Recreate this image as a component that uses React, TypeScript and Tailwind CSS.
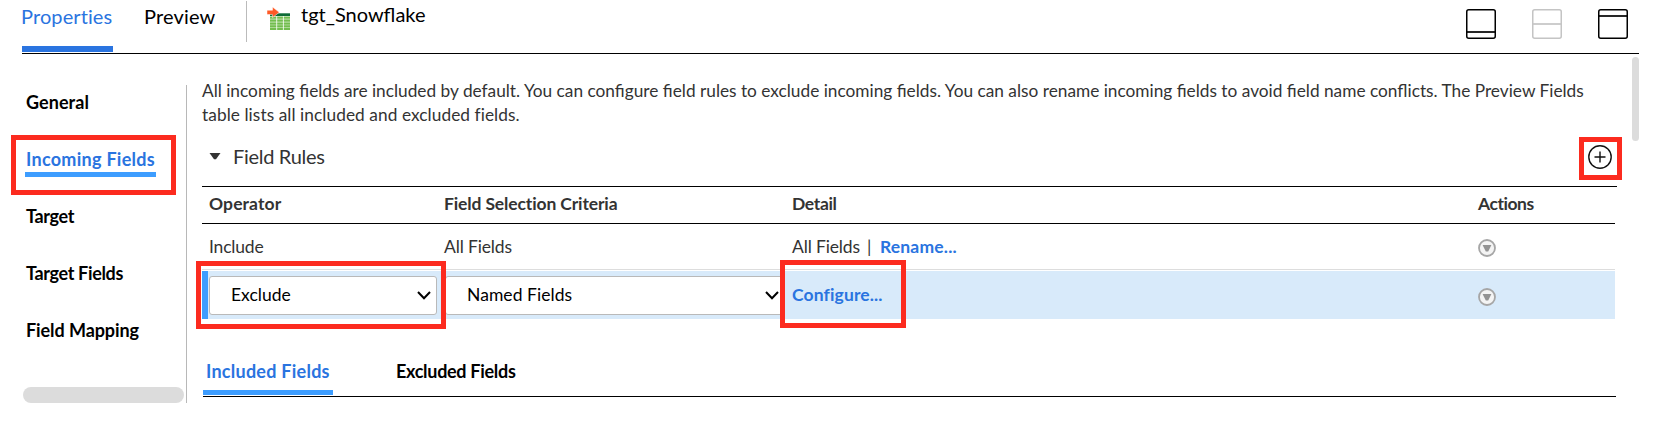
import type { ReactNode } from 'react';

const sideItems = [
  { label: 'General', cls: 'tracking-[0.07px]' },
  { label: 'Incoming Fields', cls: 'tracking-[0.28px]', active: true },
  { label: 'Target', cls: 'tracking-[-0.35px]' },
  { label: 'Target Fields', cls: 'tracking-[-0.34px]' },
  { label: 'Field Mapping', cls: 'tracking-[-0.08px]' },
];

function PaneIcon({ y, color }: { y: number; color: string }) {
  return (
    <svg width="30" height="30" viewBox="0 0 30 30" fill="none" stroke={color}>
      <rect x="0.75" y="0.75" width="28.5" height="28.5" rx="2" strokeWidth="1.5" />
      <path d={`M1 ${y}H29`} strokeWidth="1.7" />
    </svg>
  );
}

function TableIcon() {
  const rows = [9.6, 12.6, 15.6, 18.3, 21];
  return (
    <svg width="23" height="23" viewBox="0 0 23 23">
      <rect x="3" y="6.3" width="20" height="2.7" fill="#0d6b37" />
      <rect x="3" y="9.6" width="20" height="13.4" fill="#c4e4b4" />
      {rows.map((y) => (
        <rect key={y} x="3" y={y} width="20" height="2" fill="#72bd4e" />
      ))}
      <path d="M9.7 9V23M16.4 9V23" stroke="#fff" strokeWidth="0.8" />
      <path d="M0 3.2H5.5V0L12.3 5.3L5.5 10.6V7.6H0Z" fill="#ff5a26" stroke="#fff" strokeWidth="0.5" />
    </svg>
  );
}

function ActionIcon() {
  return (
    <svg className="mt-[3px]" width="18" height="18" viewBox="0 0 18 18">
      <circle cx="9" cy="9" r="8" fill="#f4f4f4" stroke="#a6a6a6" strokeWidth="1.8" />
      <path d="M4.6 6H13.4L10.2 12.6H7.8Z" fill="#939393" />
    </svg>
  );
}

function Select({ children, cls }: { children: ReactNode; cls: string }) {
  return (
    <div className={`flex h-[39px] items-center justify-between rounded-[3px] border border-[#b9b9b9] bg-white text-black ${cls}`}>
      <span className="pt-px">{children}</span>
      <svg width="14" height="9" viewBox="0 0 14 9" fill="none" stroke="#000" strokeWidth="2">
        <path d="M1 1L7 7.3L13 1" />
      </svg>
    </div>
  );
}

export default function App() {
  return (
    <div className="relative h-[421px] w-[1658px] overflow-hidden whitespace-nowrap bg-white font-['Lato',sans-serif] text-[17.5px] text-[#333]">
      <header className="ml-[22px] flex h-[54px] w-[1617px] items-start border-b border-black text-[20px] leading-8 text-black">
        <div className="h-[52px] w-[91px] border-b-[6px] border-[#2a74e0] tracking-[0.1px] text-[#2a74e0]"><span className="-ml-px">Properties</span></div>
        <div className="ml-[31px] w-[102px] tracking-[0.15px]">Preview</div>
        <div className="mt-px h-[41px] w-px bg-[#bbb]" />
        <div className="ml-5 mt-[7px]"><TableIcon /></div>
        <div className="ml-[11px] leading-[29px]">tgt_Snowflake</div>
        <div className="ml-auto mr-[11px] mt-[9px] flex gap-9">
          <PaneIcon y={23} color="#000" />
          <PaneIcon y={15} color="#c4c4c4" />
          <PaneIcon y={7} color="#000" />
        </div>
      </header>

      <div className="flex items-start">
        <nav className="mt-[31px] flex h-[318px] w-[187px] flex-col items-start border-r border-[#b8b8b8] pl-[23px] text-[18px] font-bold leading-[34px] text-black">
          {sideItems.map((it) =>
            it.active ? (
              <a key={it.label} className={`mb-[22px] ml-[2px] h-[35px] w-[131px] border-b-[5px] border-[#3d9dff] pl-px text-[#2a74e0] ${it.cls}`}>{it.label}</a>
            ) : (
              <a key={it.label} className={`mb-[23px] ml-[3px] h-[34px] ${it.cls}`}>{it.label}</a>
            ),
          )}
          <div className="mt-[17px] h-4 w-[161px] rounded-full bg-[#dcdcdc]" />
        </nav>

        <main className="ml-[15px] w-[1415px] pt-[25px]">
          <p className="text-[17.28px] leading-6">
            All incoming fields are included by default. You can configure field rules to exclude incoming fields. You can also rename incoming fields to avoid field name conflicts. The Preview Fields
            <br />
            <span className="tracking-[0.07px]">table lists all included and excluded fields.</span>
          </p>

          <div className="flex h-[59px] items-center pl-[7px] pr-[5px]">
            <svg width="12" height="7" viewBox="0 0 12 7"><path d="M0.5 0H11.5L7 6.3H5Z" fill="#333" /></svg>
            <h2 className="-mt-[2px] ml-[12px] text-[20px] tracking-[-0.3px]">Field Rules</h2>
            <svg className="ml-auto" width="24" height="24" viewBox="0 0 24 24" fill="none" stroke="#111" strokeWidth="1.4">
              <circle cx="12" cy="12" r="11.2" />
              <path d="M6.5 12H17.5M12 6.5V17.5" />
            </svg>
          </div>

          <div className="border-t border-black">
            <div className="flex h-[37px] w-[1413px] border-b border-black pl-[7px] font-bold leading-[33px]">
              <div className="w-[235px] tracking-[0.1px]">Operator</div>
              <div className="w-[348px] tracking-[-0.13px]">Field Selection Criteria</div>
              <div className="w-[686px] tracking-[-0.35px]">Detail</div>
              <div className="tracking-[-0.45px]">Actions</div>
            </div>
            <div className="flex h-[46px] w-[1413px] items-center border-b border-[#ddd] pl-[7px]">
              <div className="w-[235px] pt-[2px] tracking-[-0.2px]">Include</div>
              <div className="w-[348px] pt-[2px] tracking-[-0.15px]">All Fields</div>
              <div className="flex w-[686px] pt-[2px]">
                <span className="tracking-[-0.15px]">All Fields</span>
                <span className="ml-[7px] w-[13px]">|</span>
                <a className="font-bold tracking-[0.2px] text-[#2a74e0]">Rename...</a>
              </div>
              <ActionIcon />
            </div>
            <div className="mt-px flex h-12 w-[1413px] items-center border-l-[6px] border-[#3d9dff] bg-[#d8eafa]">
              <Select cls="ml-px w-[228px] pl-[21px] pr-[5px]">Exclude</Select>
              <Select cls="ml-2 w-[338px] pl-[21px] pr-[3px] tracking-[0.05px]">Named Fields</Select>
              <a className="ml-[9px] w-[686px] font-bold tracking-[0.13px] text-[#2a74e0]">Configure...</a>
              <ActionIcon />
            </div>
          </div>

          <div className="ml-px flex h-[78px] w-[1413px] items-start border-b border-black text-[18px] font-bold leading-8 text-black">
            <div className="h-[76px] w-[130px] border-b-[5px] border-[#3d9dff] pl-[3px] pt-[36px] tracking-[0.25px] text-[#2a74e0]">Included Fields</div>
            <div className="ml-[63px] pt-[36px] tracking-[-0.3px]">Excluded Fields</div>
          </div>
        </main>

        <div className="ml-[15px] mt-[3px] h-[84px] w-[7px] rounded-full bg-[#dcdcdc]" />
      </div>

      <div className="absolute left-[11px] top-[135px] h-[60px] w-[165px] border-5 border-[#fc2b1f]" />
      <div className="absolute left-[196px] top-[261px] h-[68px] w-[250px] border-5 border-[#fc2b1f]" />
      <div className="absolute left-[780px] top-[260px] h-[68px] w-[126px] border-5 border-[#fc2b1f]" />
      <div className="absolute left-[1579px] top-[137px] h-[43px] w-[43px] border-5 border-[#fc2b1f]" />
    </div>
  );
}
